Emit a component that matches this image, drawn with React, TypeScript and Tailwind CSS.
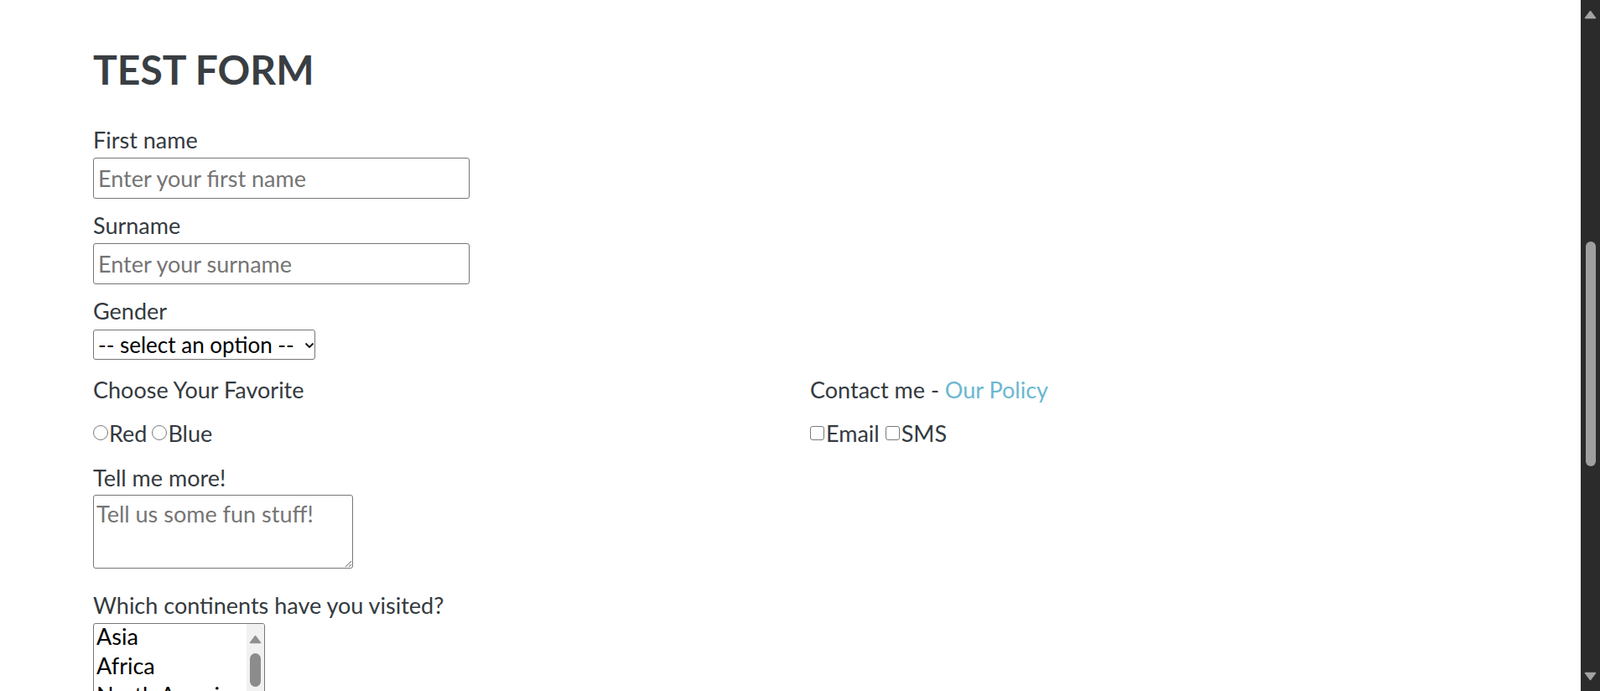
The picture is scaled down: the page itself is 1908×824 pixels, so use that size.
import { useState } from 'react';

const continents = ['Asia', 'Africa', 'North America', 'South America', 'Antarctica', 'Europe', 'Australia'];

function Arrow({ down = false, color }: { down?: boolean; color: string }) {
  return (
    <svg width="15" height="11" viewBox="0 0 15 11" className={down ? 'rotate-180' : ''}>
      <path d="M7.5 1.5 L13.5 9.5 L1.5 9.5 Z" fill={color} stroke={color} strokeWidth="1.5" strokeLinejoin="round" />
    </svg>
  );
}

function PageScrollbar() {
  return (
    <div className="w-[23px] shrink-0 h-full bg-[#2b2b2b] flex flex-col items-center">
      <div className="mt-[12px]">
        <Arrow color="#a3a3a3" />
      </div>
      <div className="mt-[265px] w-[12px] h-[268px] rounded-full bg-[#9f9f9f]" />
      <div className="flex-1" />
      <div className="mb-[12px]">
        <Arrow down color="#a3a3a3" />
      </div>
    </div>
  );
}

export default function App() {
  const [fav, setFav] = useState('');
  const [contact, setContact] = useState<string[]>([]);

  const toggle = (v: string) =>
    setContact(c => (c.includes(v) ? c.filter(x => x !== v) : [...c, v]));

  return (
    <div className="flex w-full h-screen overflow-hidden bg-white font-['Lato','Noto_Sans',sans-serif] text-[#343a40]">
      <main className="flex-1 min-w-0 pl-[111px]">
        <h1 className="pt-[54px] text-[48px] leading-[58px] font-bold text-[#393e43]">TEST FORM</h1>

        <form className="mt-[39px]" onSubmit={e => e.preventDefault()}>
          {/* Names */}
          <label className="block text-[27px] leading-[32px]">First name</label>
          <input
            type="text"
            placeholder="Enter your first name"
            className="block mt-[5px] w-[449px] h-[49px] border border-[#767676] rounded-[3px] pl-[5px] text-[27px] leading-[32px] placeholder:text-[#757575] outline-none"
          />

          <label className="block mt-[16px] text-[27px] leading-[32px]">Surname</label>
          <input
            type="text"
            placeholder="Enter your surname"
            className="block mt-[5px] w-[449px] h-[49px] border border-[#767676] rounded-[3px] pl-[5px] text-[27px] leading-[32px] placeholder:text-[#757575] outline-none"
          />

          {/* Gender */}
          <label className="block mt-[16px] text-[27px] leading-[32px]">Gender</label>
          <div className="relative mt-[6px] w-[265px] h-[36px]">
            <select
              defaultValue=""
              className="appearance-none w-full h-full border border-[#767676] rounded-[3px] pl-[5px] text-[26px] leading-[32px] text-black bg-white outline-none"
            >
              <option value="" disabled>
                -- select an option --
              </option>
              <option>Male</option>
              <option>Female</option>
              <option>Other</option>
            </select>
            <svg
              width="12"
              height="8"
              viewBox="0 0 12 8"
              className="absolute left-[252px] top-[15px] pointer-events-none"
            >
              <path d="M1.5 1.5 L6 6 L10.5 1.5" fill="none" stroke="#111" strokeWidth="1.8" />
            </svg>
          </div>

          {/* Favorite + contact */}
          <div className="mt-[20px] grid grid-cols-[855px_1fr]">
            <div>
              <p className="text-[27px] leading-[32px]">Choose Your Favorite</p>
              <div className="mt-[20px] flex items-center gap-[6px] text-[27px] leading-[32px]">
                {['Red', 'Blue'].map(c => (
                  <label key={c} className="flex items-center">
                    <input
                      type="radio"
                      name="fav"
                      checked={fav === c}
                      onChange={() => setFav(c)}
                      className="appearance-none m-0 mr-[1px] mb-[2px] w-[18px] h-[18px] rounded-full border-[1.5px] border-[#7a7a7a] bg-white checked:border-[5px] checked:border-[#0075ff]"
                    />
                    {c}
                  </label>
                ))}
              </div>
            </div>
            <div>
              <p className="text-[27px] leading-[32px]">
                Contact me - <a href="#" className="text-[#6ab8cf]">Our Policy</a>
              </p>
              <div className="mt-[20px] flex items-center gap-[7px] text-[27px] leading-[32px]">
                {['Email', 'SMS'].map(c => (
                  <label key={c} className="flex items-center">
                    <input
                      type="checkbox"
                      checked={contact.includes(c)}
                      onChange={() => toggle(c)}
                      className="appearance-none m-0 mr-[2px] mb-[2px] w-[17px] h-[17px] rounded-[3px] border-[1.5px] border-[#7a7a7a] bg-white checked:bg-[#0075ff] checked:border-[#0075ff]"
                    />
                    {c}
                  </label>
                ))}
              </div>
            </div>
          </div>

          {/* Textarea */}
          <label className="block mt-[21px] text-[27px] leading-[32px]">Tell me more!</label>
          <textarea
            placeholder="Tell us some fun stuff!"
            className="block mt-[4px] w-[310px] h-[88px] border border-[#767676] rounded-[3px] pl-[3px] pt-[6px] text-[27px] leading-[32px] placeholder:text-[#757575] outline-none"
          />

          {/* Continents listbox */}
          <label className="block mt-[28px] text-[27px] leading-[32px]">Which continents have you visited?</label>
          <div className="mt-[5px] w-[205px] h-[142px] border border-[#767676] rounded-[3px] flex overflow-hidden">
            <ul className="flex-1 min-w-0 pl-[3px] text-black text-[27px]">
              {continents.map(c => (
                <li key={c} className="h-[35px] leading-[29px] whitespace-nowrap overflow-hidden">
                  {c}
                </li>
              ))}
            </ul>
            <div className="w-[21px] shrink-0 bg-[#f1f1f1] flex flex-col items-center">
              <div className="mt-[13px]">
                <Arrow color="#8f8f8f" />
              </div>
              <div className="mt-[11px] w-[13px] h-[40px] rounded-full bg-[#8c8c8c]" />
            </div>
          </div>
        </form>
      </main>
      <PageScrollbar />
    </div>
  );
}
